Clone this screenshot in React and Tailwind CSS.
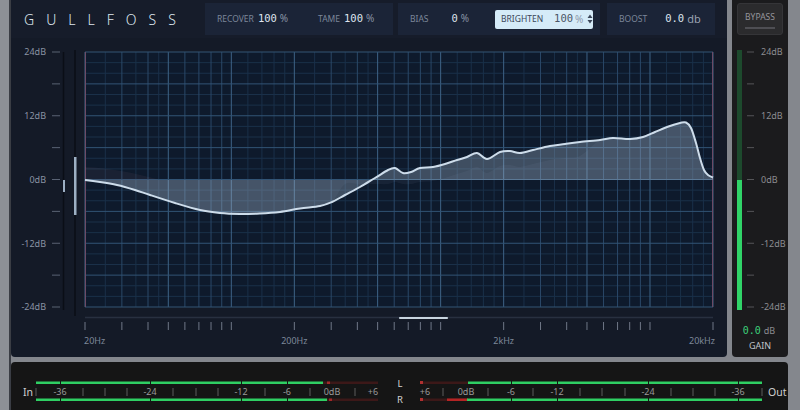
import React from "react";

const SANS = "'Noto Sans', 'Open Sans', sans-serif";

// log frequency → page x (20Hz at 85, 20kHz at 713)
const fx = (f) => 85 + (628 / 3) * Math.log10(f / 20);

const freqs = [];
[10, 100, 1000, 10000].forEach((d) => {
  for (let k = 1; k <= 9; k++) {
    const f = k * d;
    if (f >= 20 && f <= 20000) freqs.push({ f, major: k === 1 || k === 2 || k === 5 });
  }
});
const fineFreqs = [];
[10, 100, 1000, 10000].forEach((d) => {
  [1.2, 1.4, 1.6, 1.8, 2.5, 3.5, 4.5].forEach((k) => {
    const f = k * d;
    if (f > 20 && f < 20000) fineFreqs.push(f);
  });
});

const curvePts = [
  [85, 180], [100, 182], [117, 185], [135, 190], [150, 195], [175, 203], [200, 210],
  [220, 213], [240, 214], [260, 213.5], [280, 212], [300, 208.5], [320, 206], [332, 202],
  [345, 195], [360, 187], [375, 178], [388, 170], [395, 168], [403, 173], [411, 172],
  [420, 168], [433, 167], [445, 164], [457, 160], [467, 157], [477, 153], [487, 159],
  [500, 152], [510, 151], [520, 153], [533, 150], [550, 146], [565, 144], [580, 142],
  [600, 140], [613, 138], [630, 139], [643, 137], [655, 132], [667, 127], [680, 123],
  [686, 122.5], [691, 128], [696, 143], [700, 158], [704, 170], [708, 175], [713, 177.5],
];

const smooth = (pts) => {
  let d = `M${pts[0][0]},${pts[0][1]}`;
  for (let i = 0; i < pts.length - 1; i++) {
    const p0 = pts[i - 1] || pts[i];
    const p1 = pts[i];
    const p2 = pts[i + 1];
    const p3 = pts[i + 2] || p2;
    const c1x = p1[0] + (p2[0] - p0[0]) / 6;
    const c1y = p1[1] + (p2[1] - p0[1]) / 6;
    const c2x = p2[0] - (p3[0] - p1[0]) / 6;
    const c2y = p2[1] - (p3[1] - p1[1]) / 6;
    d += ` C${c1x.toFixed(1)},${c1y.toFixed(1)} ${c2x.toFixed(1)},${c2y.toFixed(1)} ${p2[0]},${p2[1]}`;
  }
  return d;
};

const curve = smooth(curvePts);
const ghost = smooth(
  curvePts.map(([x, y]) => [x, x > 340 && x < 600 ? Math.min(y + 14, 184) : y])
);

const dbLabels = [
  { y: 52, t: "24dB" },
  { y: 116, t: "12dB" },
  { y: 180, t: "0dB" },
  { y: 243.5, t: "-12dB" },
  { y: 307, t: "-24dB" },
];

const Param = ({ label, value, unit, w }) => (
  <div className={`flex items-baseline ${w}`}>
    <span className="text-[8.5px] text-[#7c879a]">{label}</span>
    <span className="ml-[4px] text-[10.5px] text-[#dfe5ee] font-['DejaVu_Sans_Mono',monospace]">
      {value}
    </span>
    <span className="ml-[3px] text-[10px] text-[#8a94a5]">{unit}</span>
  </div>
);

const Header = () => (
  <div className="h-[38px] flex items-start pt-[3px] bg-[#161c2a]">
    <div className="w-[194px] h-[32px] pl-[13px] flex items-center">
      <span className="text-[14px] tracking-[12px] text-[#dde5ee] font-light">GULLFOSS</span>
    </div>
    <div className="w-[188px] h-[32px] bg-[#1b2437] flex items-center pl-[12px]">
      <Param label="RECOVER" value="100" unit="%" w="w-[101px]" />
      <Param label="TAME" value="100" unit="%" />
    </div>
    <div className="w-[202px] h-[32px] ml-[5px] bg-[#1b2437] flex items-center pl-[12px]">
      <div className="flex items-baseline w-[85px]">
        <span className="text-[8.5px] text-[#7c879a]">BIAS</span>
        <span className="ml-[23px] text-[10.5px] text-[#dfe5ee] font-['DejaVu_Sans_Mono',monospace]">0</span>
        <span className="ml-[3px] text-[10px] text-[#8a94a5]">%</span>
      </div>
      <div className="w-[98px] h-[19px] bg-[#d5ebf8] rounded-[2px] flex items-center pl-[6px]">
        <span className="text-[8.5px] text-[#3a4558]">BRIGHTEN</span>
        <span className="ml-[11px] text-[10.5px] text-[#4a5566] font-['DejaVu_Sans_Mono',monospace]">100</span>
        <span className="ml-[2px] text-[10px] text-[#8f9aab]">%</span>
        <svg width="6" height="10" viewBox="0 0 6 10" className="ml-[4px] shrink-0">
          <path d="M3 0.5 L5.5 4 H0.5 Z M3 9.5 L5.5 6 H0.5 Z" fill="#3a4558" />
        </svg>
      </div>
    </div>
    <div className="w-[108px] h-[32px] ml-[7px] bg-[#1b2437] flex items-center pl-[12px]">
      <span className="text-[8.5px] text-[#7c879a]">BOOST</span>
      <span className="ml-[18px] text-[10.5px] text-[#dfe5ee] font-['DejaVu_Sans_Mono',monospace]">0.0</span>
      <span className="ml-[3px] text-[11px] text-[#9aa3b2]">db</span>
    </div>
  </div>
);

const Chart = () => {
  const hMajor = [];
  const hMinor = [];
  for (let i = 0; i <= 24; i++) {
    const y = 52 + (255 / 24) * i;
    if (i % 3 === 0) hMajor.push(y);
    else hMinor.push(y);
  }
  return (
    <svg width="716" height="319" className="block">
      <g transform="translate(-11,-38)" fontFamily={SANS}>
        {/* dB axis */}
        {dbLabels.map((l) => (
          <text key={l.t} x="46" y={l.y + 3} textAnchor="end" fontSize="9" fill="#8a93a3">
            {l.t}
          </text>
        ))}
        {[0, 1, 2, 3, 4, 5, 6, 7, 8].map((i) => (
          <line key={i} x1="52" x2="60" y1={52 + 31.875 * i} y2={52 + 31.875 * i} stroke="#596273" strokeWidth="1" />
        ))}

        {/* side sliders */}
        <line x1="63.5" x2="63.5" y1="52" y2="310" stroke="#0a0e16" strokeWidth="1.5" />
        <line x1="75" x2="75" y1="50" y2="316" stroke="#0a0e16" strokeWidth="1.5" />
        <rect x="74" y="157" width="2.5" height="58" fill="#9db0c4" />
        <rect x="63" y="180" width="2" height="12" fill="#9db0c4" />

        {/* graph */}
        <rect x="85" y="52" width="628" height="255" fill="#0e1a2c" />
        {hMinor.map((y) => (
          <line key={"hm" + y} x1="85" x2="713" y1={y} y2={y} stroke="#1a3049" strokeWidth="1" />
        ))}
        {fineFreqs.map((f) => (
          <line key={"vf" + f} x1={fx(f)} x2={fx(f)} y1="52" y2="307" stroke="#1a3049" strokeWidth="1" />
        ))}
        {freqs.map(({ f, major }) => (
          <line
            key={"v" + f}
            x1={fx(f)}
            x2={fx(f)}
            y1="52"
            y2="307"
            stroke={major ? "#3e6386" : "#2a4868"}
            strokeWidth="1"
          />
        ))}
        {hMajor.map((y) => (
          <line key={"hM" + y} x1="85" x2="713" y1={y} y2={y} stroke="#325475" strokeWidth="1" />
        ))}
        <line x1="85.5" x2="85.5" y1="52" y2="307" stroke="#6d4b66" strokeWidth="1" />
        <line x1="712.5" x2="712.5" y1="52" y2="307" stroke="#6d4b66" strokeWidth="1" />

        {/* faint pink ghost at low end */}
        <path d="M85,167 C110,168 135,173 160,180 L85,180 Z" fill="#b07a88" opacity="0.08" />
        {/* ghost band */}
        <path d={`${ghost} L713,180 L85,180 Z`} fill="#8a9bb0" opacity="0.08" />
        {/* main fill */}
        <path d={`${curve} L713,180 L85,180 Z`} fill="#a9bfd4" opacity="0.32" />
        <path d={curve} fill="none" stroke="#cddcea" strokeWidth="2" strokeLinejoin="round" />

        {/* scroll bar */}
        <line x1="85" x2="713" y1="317.5" y2="317.5" stroke="#283040" strokeWidth="1.5" />
        <line x1="400" x2="447" y1="318" y2="318" stroke="#c8d5e0" strokeWidth="2.2" strokeLinecap="round" />

        {/* frequency ticks */}
        {freqs.map(({ f }) => (
          <line key={"t" + f} x1={fx(f)} x2={fx(f)} y1="322" y2="330" stroke="#6f7787" strokeWidth="1" />
        ))}
        <text x="84" y="344" fontSize="9" fill="#7d8899">20Hz</text>
        <text x={fx(200)} y="344" textAnchor="middle" fontSize="9" fill="#7d8899">200Hz</text>
        <text x={fx(2000)} y="344" textAnchor="middle" fontSize="9" fill="#7d8899">2kHz</text>
        <text x="715" y="344" textAnchor="end" fontSize="9" fill="#7d8899">20kHz</text>
      </g>
    </svg>
  );
};

const GainMeter = () => (
  <svg width="56" height="285" className="block">
    <g transform="translate(-732,-35)" fontFamily={SANS}>
      <rect x="737" y="50" width="5" height="130" fill="#1d4a2d" />
      <rect x="737" y="180" width="5" height="130" fill="#30d468" />
      {[0, 1, 2, 3, 4, 5, 6, 7, 8].map((i) => (
        <line key={i} x1="747" x2="754" y1={52 + 31.875 * i} y2={52 + 31.875 * i} stroke="#555558" strokeWidth="1" />
      ))}
      {dbLabels.map((l) => (
        <text key={l.t} x="761" y={l.y + 3} fontSize="9" fill="#8c8c90">
          {l.t}
        </text>
      ))}
    </g>
  </svg>
);

const leftTicks = [36, 83, 105, 127, 173, 196, 218, 265, 310, 355];
const leftLabels = [
  { x: 60, t: "-36" },
  { x: 150, t: "-24" },
  { x: 241, t: "-12" },
  { x: 287, t: "-6" },
  { x: 332, t: "0dB" },
  { x: 373, t: "+6" },
];
const notches = [60, 150, 241, 287];
const mx = (x) => 798 - x;

const IOMeter = () => (
  <svg width="777" height="48" className="block">
    <g transform="translate(-11,-362)" fontFamily={SANS}>
      <text x="23" y="396" fontSize="10.5" fill="#cfcfcf">In</text>
      <text x="768" y="396" fontSize="10.5" fill="#cfcfcf">Out</text>
      <text x="400" y="387" textAnchor="middle" fontSize="9.5" fill="#d2d2d2">L</text>
      <text x="400" y="403" textAnchor="middle" fontSize="9.5" fill="#d2d2d2">R</text>

      {/* left meter */}
      <rect x="323" y="381.5" width="55" height="2.5" fill="#3c1818" />
      <rect x="327" y="398.5" width="51" height="2.5" fill="#3c1818" />
      <rect x="36" y="381.5" width="287" height="2.5" fill="#2fcf63" />
      <rect x="36" y="398.5" width="291" height="2.5" fill="#2fcf63" />
      <rect x="327" y="381.5" width="3" height="2.5" fill="#a02828" />
      <rect x="329" y="398.5" width="3" height="2.5" fill="#a02828" />

      {/* right meter */}
      <rect x="420" y="381.5" width="48" height="2.5" fill="#3c1818" />
      <rect x="420" y="398.5" width="48" height="2.5" fill="#3c1818" />
      <rect x="447" y="398.5" width="21" height="2.5" fill="#b42424" />
      <rect x="420" y="381" width="3" height="3" fill="#b03030" />
      <rect x="420" y="398" width="3" height="3" fill="#b03030" />
      <rect x="468" y="381.5" width="294" height="2.5" fill="#2fcf63" />
      <rect x="467" y="398.5" width="295" height="2.5" fill="#2fcf63" />

      {notches.map((x) => (
        <g key={x}>
          <rect x={x} y="381" width="1" height="3.5" fill="#151515" />
          <rect x={x} y="398" width="1" height="3.5" fill="#151515" />
          <rect x={mx(x)} y="381" width="1" height="3.5" fill="#151515" />
          <rect x={mx(x)} y="398" width="1" height="3.5" fill="#151515" />
        </g>
      ))}

      {leftTicks.map((x) => (
        <g key={x}>
          <line x1={x} x2={x} y1="388" y2="396" stroke="#5c5c5c" strokeWidth="1" />
          <line x1={mx(x)} x2={mx(x)} y1="388" y2="396" stroke="#5c5c5c" strokeWidth="1" />
        </g>
      ))}
      {leftLabels.map((l) => (
        <g key={l.t}>
          <text x={l.x} y="395" textAnchor="middle" fontSize="9" fill="#9a9a9a">{l.t}</text>
          <text x={mx(l.x)} y="395" textAnchor="middle" fontSize="9" fill="#9a9a9a">{l.t}</text>
        </g>
      ))}
    </g>
  </svg>
);

export default function App() {
  return (
    <div className="w-[800px] h-[410px] overflow-hidden flex bg-[#84878d] font-['Noto_Sans','Open_Sans',sans-serif]">
      <div className="w-[9px] h-full bg-[#8d9096]" />
      <div className="w-[2px] h-full bg-[#3a3d44]" />
      <div className="w-[777px] flex flex-col">
        <div className="h-[357px] flex">
          {/* main panel */}
          <div className="w-[716px] h-full bg-[#141a27] rounded-b-[4px] flex flex-col overflow-hidden">
            <Header />
            <Chart />
          </div>
          {/* gain panel */}
          <div className="w-[56px] h-full ml-[5px] bg-[#1b1b1d] rounded-b-[4px] flex flex-col">
            <div className="mt-[3px] mx-[5px] h-[32px] bg-[#2b2b2d] border border-[#353538] rounded-[3px] flex flex-col items-center justify-center">
              <span className="text-[8.5px] text-[#96969c] mt-[2px]">BYPASS</span>
              <div className="w-[30px] h-[2px] bg-[#4e4e53] mt-[4px]" />
            </div>
            <GainMeter />
            <div className="flex items-baseline justify-center pr-[2px] mt-[3px]">
              <span className="text-[10px] text-[#3bd07a] font-['DejaVu_Sans_Mono',monospace]">0.0</span>
              <span className="ml-[3px] text-[9px] text-[#8c8c90]">dB</span>
            </div>
            <div className="text-center text-[9px] text-[#c0c4ca] mt-[1px]">GAIN</div>
          </div>
        </div>
        <div className="h-[48px] mt-[5px] bg-[#151515] rounded-t-[4px]">
          <IOMeter />
        </div>
      </div>
      <div className="flex-1" />
    </div>
  );
}
